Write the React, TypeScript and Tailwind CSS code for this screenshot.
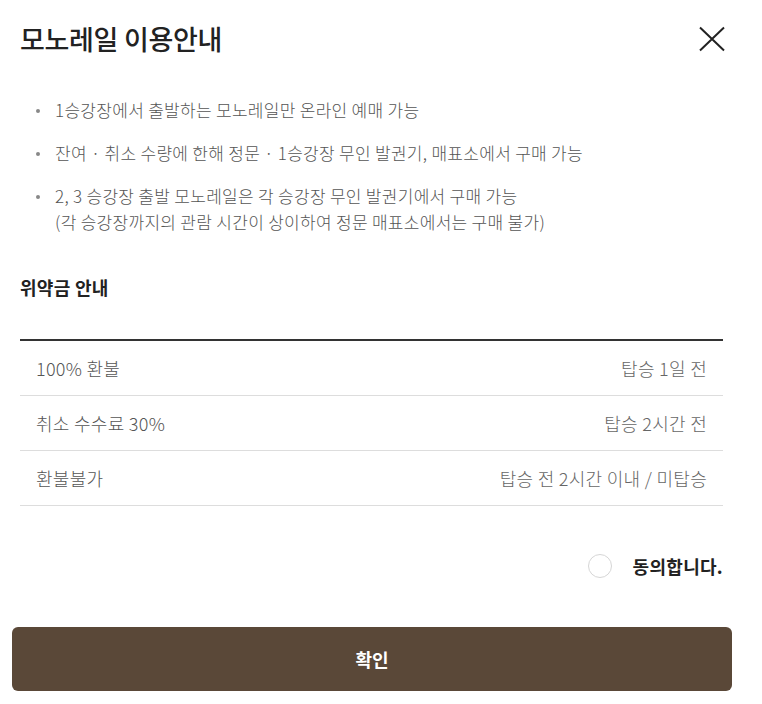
import { useState } from 'react'

const NOTICES = [
  ['1승강장에서 출발하는 모노레일만 온라인 예매 가능'],
  ['잔여 · 취소 수량에 한해 정문 · 1승강장 무인 발권기, 매표소에서 구매 가능'],
  [
    '2, 3 승강장 출발 모노레일은 각 승강장 무인 발권기에서 구매 가능',
    '(각 승강장까지의 관람 시간이 상이하여 정문 매표소에서는 구매 불가)',
  ],
]

const PENALTIES = [
  { label: '100% 환불', when: '탑승 1일 전' },
  { label: '취소 수수료 30%', when: '탑승 2시간 전' },
  { label: '환불불가', when: '탑승 전 2시간 이내 / 미탑승' },
]

export default function App() {
  const [agreed, setAgreed] = useState(false)

  return (
    <div className="min-h-[704px] w-[762px] bg-white font-['Noto_Sans_CJK_KR','Noto_Sans',sans-serif] text-[#222]">
      {/* Header */}
      <div className="ml-5 flex w-[704px] items-center justify-between pt-[20px]">
        <h1 className="text-[27px] font-medium leading-[38px] tracking-[-0.3px] text-[#222]">모노레일 이용안내</h1>
        <button aria-label="닫기" className="mr-[-1px] flex h-[26px] w-[26px] items-center justify-center">
          <svg width="26" height="26" viewBox="0 0 26 26" fill="none" stroke="#222" strokeWidth="2">
            <path d="M1 1.5l24 23M25 1.5l-24 23" />
          </svg>
        </button>
      </div>

      {/* Notices */}
      <ul className="ml-5 mt-[39px] flex w-[704px] flex-col gap-[17px]">
        {NOTICES.map((lines, i) => (
          <li key={i} className="flex text-[17px] font-light leading-[26px] text-[#555]">
            <span className="flex w-[35px] shrink-0 justify-center pl-[1px]">
              <span className="mt-[12px] h-[4px] w-[4px] rounded-full bg-[#888]" />
            </span>
            <span className="tracking-[0.3px]">
              {lines.map((l, j) => (
                <span key={j} className="block">
                  {l}
                </span>
              ))}
            </span>
          </li>
        ))}
      </ul>

      {/* Penalty */}
      <div className="ml-5 w-[703px]">
        <h2 className="mt-[39px] text-[18px] font-bold leading-[26px] tracking-[0.3px] text-[#222]">위약금 안내</h2>
        <div className="mt-[39px] border-t-2 border-[#333]">
          {PENALTIES.map((p) => (
            <div
              key={p.label}
              className="flex h-[55px] items-center justify-between border-b border-[#ddd] pl-4 pr-4 text-[18px] font-light tracking-[0.3px] text-[#555]"
            >
              <span>{p.label}</span>
              <span className="text-[#666]">{p.when}</span>
            </div>
          ))}
        </div>

        {/* Agree */}
        <div className="mt-[47px] flex justify-end">
          <label className="flex cursor-pointer items-center gap-[21px]">
            <button
              onClick={() => setAgreed((a) => !a)}
              className={`h-[24px] w-[24px] rounded-full border ${agreed ? 'border-[#5a4838] bg-[#5a4838]' : 'border-[#d6d6d6] bg-white'}`}
            />
            <span className="text-[18px] font-bold leading-[26px] tracking-[0.3px] text-[#222]">동의합니다.</span>
          </label>
        </div>
      </div>

      {/* Confirm */}
      <div className="ml-3 mt-[48px] w-[720px]">
        <button className="flex h-[64px] w-full items-center justify-center rounded-[6px] bg-[#5a4838] text-[18px] font-bold text-white">
          확인
        </button>
      </div>
    </div>
  )
}
